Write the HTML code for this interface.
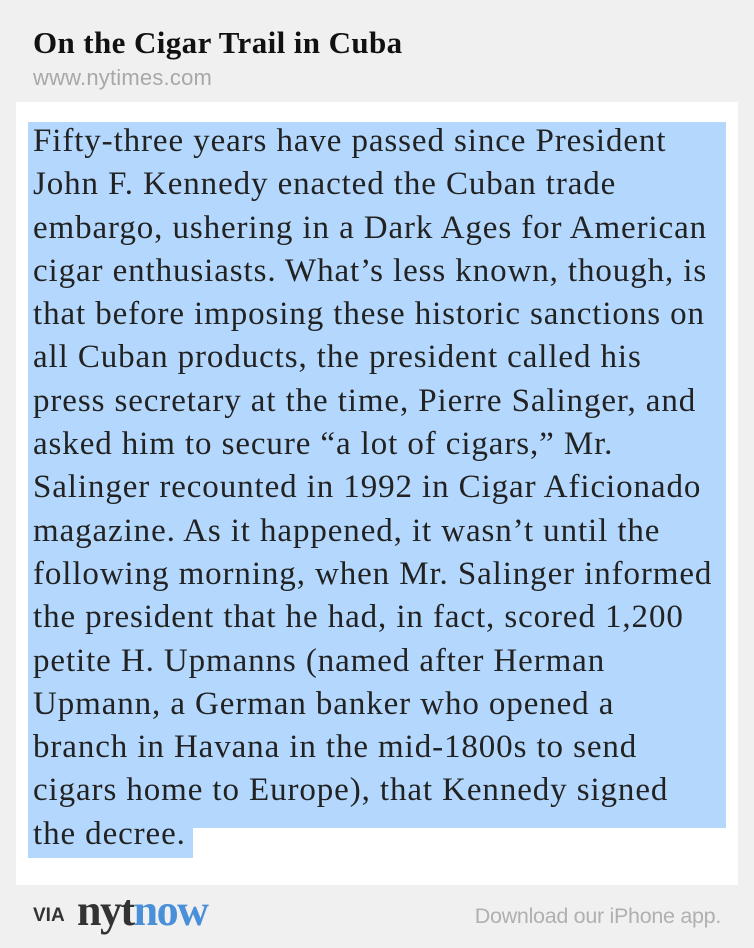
<!DOCTYPE html>
<html><head><meta charset="utf-8"><style>
html,body{margin:0;padding:0;background:#f0f0f0;width:754px;height:948px;overflow:hidden}
.t{position:absolute;left:33px;top:25px;font:bold 31px "Liberation Serif",serif;color:#111;letter-spacing:0.4px}
.u{position:absolute;left:33px;top:65px;font:22px "Liberation Sans",sans-serif;color:#a8a8a8;letter-spacing:0.2px}
.p{position:absolute;left:16px;top:102px;width:722px;height:783px;background:#fff}
.hl{position:absolute;left:28px;top:122px;width:698px;height:706px;background:#b4d8fd}
.hl2{position:absolute;left:28px;top:828px;width:165px;height:30px;background:#b4d8fd}
.txt{position:absolute;left:33px;top:120px;font:33px/43.3px "Liberation Serif",serif;color:#222;white-space:nowrap;letter-spacing:0.9px}
.via{position:absolute;left:33px;top:905px;font:bold 19px "Liberation Sans",sans-serif;color:#333}
.ny{position:absolute;left:77px;top:885px;font:900 44px "Liberation Serif",serif;color:#333;letter-spacing:-1.5px}
.ny span{color:#4a90d9}
.dl{position:absolute;right:33px;top:904px;font:21.5px "Liberation Sans",sans-serif;color:#b0b0b0;letter-spacing:-0.3px}
</style></head><body>
<div class="t">On the Cigar Trail in Cuba</div>
<div class="u">www.nytimes.com</div>
<div class="p"></div>
<div class="hl"></div><div class="hl2"></div>
<div class="txt">Fifty-three years have passed since President<br>John F. Kennedy enacted the Cuban trade<br>embargo, ushering in a Dark Ages for American<br>cigar enthusiasts. What’s less known, though, is<br>that before imposing these historic sanctions on<br>all Cuban products, the president called his<br>press secretary at the time, Pierre Salinger, and<br>asked him to secure “a lot of cigars,” Mr.<br>Salinger recounted in 1992 in Cigar Aficionado<br>magazine. As it happened, it wasn’t until the<br>following morning, when Mr. Salinger informed<br>the president that he had, in fact, scored 1,200<br>petite H. Upmanns (named after Herman<br>Upmann, a German banker who opened a<br>branch in Havana in the mid-1800s to send<br>cigars home to Europe), that Kennedy signed<br>the decree.</div>
<div class="via">VIA</div>
<div class="ny">nyt<span>now</span></div>
<div class="dl">Download our iPhone app.</div>
</body></html>
